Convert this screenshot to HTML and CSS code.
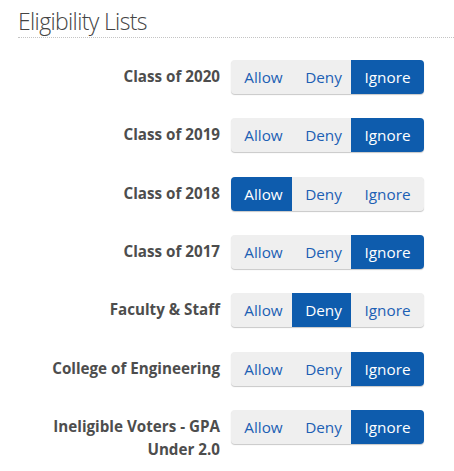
FILE: index.html
```html
<!DOCTYPE html>
<html>
<head>
<meta charset="utf-8">
<link rel="stylesheet" href="styles.css">
</head>
<body>
<div class="panel">
  <h2 class="title">Eligibility Lists</h2>
  <div class="rows">
    <div class="row">
      <div class="label">Class of 2020</div>
      <div class="group"><span class="seg allow">Allow</span><span class="seg deny">Deny</span><span class="seg ignore active">Ignore</span></div>
    </div>
    <div class="row">
      <div class="label">Class of 2019</div>
      <div class="group"><span class="seg allow">Allow</span><span class="seg deny">Deny</span><span class="seg ignore active">Ignore</span></div>
    </div>
    <div class="row">
      <div class="label">Class of 2018</div>
      <div class="group"><span class="seg allow active">Allow</span><span class="seg deny">Deny</span><span class="seg ignore">Ignore</span></div>
    </div>
    <div class="row">
      <div class="label">Class of 2017</div>
      <div class="group"><span class="seg allow">Allow</span><span class="seg deny">Deny</span><span class="seg ignore active">Ignore</span></div>
    </div>
    <div class="row">
      <div class="label">Faculty &amp; Staff</div>
      <div class="group"><span class="seg allow">Allow</span><span class="seg deny active">Deny</span><span class="seg ignore">Ignore</span></div>
    </div>
    <div class="row">
      <div class="label">College of Engineering</div>
      <div class="group"><span class="seg allow">Allow</span><span class="seg deny">Deny</span><span class="seg ignore active">Ignore</span></div>
    </div>
    <div class="row">
      <div class="label">Ineligible Voters - GPA Under 2.0</div>
      <div class="group"><span class="seg allow">Allow</span><span class="seg deny">Deny</span><span class="seg ignore active">Ignore</span></div>
    </div>
  </div>
</div>
</body>
</html>
```
FILE: styles.css
```css
html, body {
  margin: 0;
  padding: 0;
  background: #ffffff;
}
body {
  font-family: "Open Sans", "Noto Sans", sans-serif;
  color: #4a4a4a;
}
.panel {
  padding: 6px 0 0 18px;
}
.title {
  margin: 0;
  font-size: 23px;
  font-weight: 300;
  letter-spacing: -0.65px;
  line-height: 30px;
  color: #444444;
  padding-bottom: 1px;
  border-bottom: 1px dotted #c4c4c4;
}
.rows {
  padding-top: 22px;
}
.row {
  display: flex;
  align-items: flex-start;
  margin-bottom: 24.33px;
}
.label {
  width: 202px;
  text-align: right;
  font-size: 15.2px;
  font-weight: 700;
  line-height: 23px;
  color: #4d4d4d;
  padding-top: 5px;
  margin-right: 11px;
}
.group {
  display: flex;
  height: 34px;
  border-radius: 4px;
  background: #efefef;
  box-shadow: 0 1px 1px rgba(0,0,0,0.22);
  overflow: hidden;
}
.seg {
  display: flex;
  align-items: center;
  justify-content: center;
  font-size: 15.3px;
  color: #1c60b4;
}
.seg.allow {
  width: 61px;
  padding-left: 4px;
  box-sizing: border-box;
}
.seg.deny {
  width: 59px;
  padding-left: 4px;
  box-sizing: border-box;
}
.seg.ignore {
  width: 73px;
}
.seg.active {
  background: #0e5cad;
  color: #ffffff;
}
```
